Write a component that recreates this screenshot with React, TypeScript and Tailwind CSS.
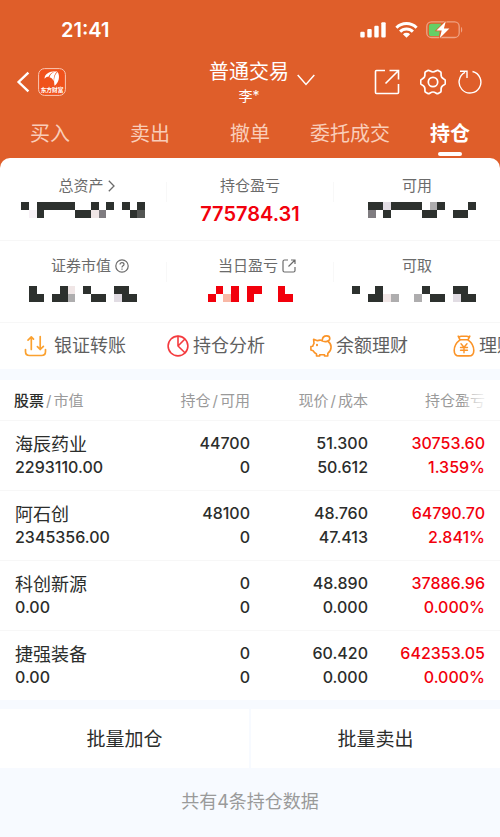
import type { ReactNode } from "react";

const tabs = ["买入", "卖出", "撤单", "委托成交", "持仓"];

const holdings = [
  {
    name: "海辰药业",
    value: "2293110.00",
    amount: "44700",
    usable: "0",
    price: "51.300",
    cost: "50.612",
    profit: "30753.60",
    rate: "1.359%",
  },
  {
    name: "阿石创",
    value: "2345356.00",
    amount: "48100",
    usable: "0",
    price: "48.760",
    cost: "47.413",
    profit: "64790.70",
    rate: "2.841%",
  },
  {
    name: "科创新源",
    value: "0.00",
    amount: "0",
    usable: "0",
    price: "48.890",
    cost: "0.000",
    profit: "37886.96",
    rate: "0.000%",
  },
  {
    name: "捷强装备",
    value: "0.00",
    amount: "0",
    usable: "0",
    price: "60.420",
    cost: "0.000",
    profit: "642353.05",
    rate: "0.000%",
  },
];

// Each character is one block of the censored amount
const blockColors: Record<string, string> = {
  "#": "#2d312e",
  r: "#f2000c",
  o: "#f8b8a6",
  l: "#e1dce3",
  p: "#f0e6e6",
  w: "#f7f1f6",
  m: "#aeadae",
  g: "#7f7c80",
  d: "#535553",
};

function Mosaic({ rows, className }: { rows: string[]; className: string }) {
  return (
    <svg
      viewBox={`0 0 ${rows[0].length} 2`}
      preserveAspectRatio="none"
      shapeRendering="crispEdges"
      aria-hidden="true"
      className={`h-4 ${className}`}
    >
      {rows.map((row, y) =>
        row
          .split("")
          .map((c, x) =>
            blockColors[c] ? (
              <rect key={`${x}-${y}`} x={x} y={y} width="1" height="1" fill={blockColors[c]} />
            ) : null
          )
      )}
    </svg>
  );
}

function StatusBar() {
  return (
    <div className="flex h-14 items-center justify-between pt-1 pr-[37px] pl-[61px]">
      <span className="text-xl font-semibold">21:41</span>
      <div className="flex items-center gap-2">
        <svg viewBox="0 0 27 17" className="h-[17px] w-[27px]" fill="currentColor" aria-hidden="true">
          <rect x="0.3" y="9.8" width="4.4" height="5.7" rx="1.1" />
          <rect x="7.3" y="7" width="4.4" height="8.5" rx="1.1" />
          <rect x="14.3" y="3.8" width="4.4" height="11.7" rx="1.1" />
          <rect x="21.3" y="0.2" width="4.4" height="15.3" rx="1.1" />
        </svg>
        <svg viewBox="0 0 23 17" className="h-[17px] w-[23px]" fill="none" stroke="currentColor" strokeWidth="3" aria-hidden="true">
          <path d="M1.4 5.700a14.300 14.300 0 0 1 20.200 0" />
          <path d="M5.100 9.600a9 9 0 0 1 12.800 0" />
          <path d="M11.500 15.800 7.900 12.200a5.200 5.200 0 0 1 7.200 0z" fill="currentColor" stroke="none" />
        </svg>
        <svg viewBox="0 0 37 18" className="h-[18px] w-[37px]" fill="none" aria-hidden="true">
          <rect x="0.8" y="0.9" width="32.400" height="15.600" rx="4.600" stroke="#efa283" strokeWidth="1.300" />
          <path d="M35 6c1.600.5 1.600 5.100 0 5.600z" fill="#efa283" />
          <path d="M5.500 2.800H15l-2 12.200H5.500a2.600 2.600 0 0 1-2.600-2.600V5.400a2.600 2.600 0 0 1 2.600-2.600z" fill="#65cf66" />
          <path d="M19.800.2 10.400 9.600h5.300l-2 7.600L23.400 7.600h-5.500z" fill="#fff" stroke="#df5e2a" strokeWidth="1.400" paintOrder="stroke" />
        </svg>
      </div>
    </div>
  );
}

function TitleBar() {
  return (
    <div className="grid h-[50px] grid-cols-[1fr_auto_1fr] items-center pr-[18px] pl-4">
      <div className="flex items-center gap-2">
        <button type="button" aria-label="返回">
          <svg viewBox="0 0 14 22" className="h-[22px] w-[14px]" fill="none" stroke="currentColor" strokeWidth="2.400" aria-hidden="true">
            <path d="M12.400 1.600 2.600 11l9.800 9.400" />
          </svg>
        </button>
        <svg viewBox="0 0 28 28" className="size-7" role="img" aria-label="东方财富">
          <rect x="0.600" y="0.600" width="26.800" height="26.800" rx="6" fill="#f0521b" stroke="#f8c9b6" />
          <path d="M6.600 10.800C6.300 6.200 11 3 18 3.200 13.500 4.200 11.500 6.200 10.800 8.600 9.500 8.500 8 9.300 6.600 10.800z" fill="#fff" />
          <path d="M11.600 9.400C12.200 6 15 3.600 19.400 3.300 16.800 5.400 15.500 8.600 15.700 13.200 14.800 10.800 13.200 9.500 11.600 9.400z" fill="#fff" />
          <path d="M16.600 17.800C15.300 11.500 16.500 6.500 19.700 4 22.400 8.600 20.600 14.500 16.600 17.800z" fill="#fff" />
          <text x="14" y="24.400" fontSize="5.700" fontWeight="700" fill="#fff" textAnchor="middle">
            东方财富
          </text>
        </svg>
      </div>

      <button type="button" className="flex items-center gap-2 pl-[26px]">
        <span className="block pt-1">
          <span className="block text-xl leading-6">普通交易</span>
          <span className="block text-sm leading-6">李*</span>
        </span>
        <svg viewBox="0 0 18 12" className="mb-1 h-3 w-[18px]" fill="none" stroke="currentColor" strokeWidth="1.500" aria-hidden="true">
          <path d="M0.700 0.900 9 10.400 17.300 0.900" />
        </svg>
      </button>

      <div className="flex items-center justify-end">
        <button type="button" aria-label="分享" className="mr-5">
          <svg viewBox="0 0 26 26" className="size-[26px]" fill="none" stroke="currentColor" strokeWidth="1.600" aria-hidden="true">
            <path d="M11 1.500H2.500q-1 0-1 1v21q0 1 1 1h21q1 0 1-1V15" />
            <path d="M11.500 14.500 24.500 1.500M15.500 1.500h9v9" />
          </svg>
        </button>
        <button type="button" aria-label="设置" className="mr-3">
          <svg viewBox="0 0 26 26" className="size-[26px]" fill="none" stroke="currentColor" strokeWidth="1.700" strokeLinejoin="round" aria-hidden="true">
            <path d="M8.300 1.300C10 1.300 10.500 3 13 3s3-1.700 4.700-1.700l3.100 1.800c.8 1.500-.4 2.700.8 4.900 1.300 2.100 3 1.700 3.700 3.200v3.600c-.7 1.500-2.400 1.100-3.700 3.200-1.200 2.200 0 3.400-.8 4.900l-3.100 1.800C16 24.700 15.500 23 13 23s-3 1.700-4.700 1.700l-3.100-1.800c-.8-1.500.4-2.700-.8-4.900C3.100 15.900 1.400 16.300.7 14.800v-3.600C1.400 9.700 3.100 10.100 4.400 8c1.200-2.200 0-3.400.8-4.900z" />
            <circle cx="13" cy="13" r="4.700" />
          </svg>
        </button>
        <button type="button" aria-label="刷新">
          <svg viewBox="0 0 24 26" className="h-[26px] w-6" fill="none" stroke="currentColor" strokeWidth="1.400" aria-hidden="true">
            <path d="M14.500 2.500a10.900 10.900 0 1 1-7.500.900" />
            <path d="M2 2.300h7v6.800" />
          </svg>
        </button>
      </div>
    </div>
  );
}

function Tabs() {
  return (
    <nav className="grid h-[52px] grid-cols-5">
      {tabs.map((tab) => {
        const active = tab === "持仓";
        return (
          <a
            key={tab}
            href="#"
            className={
              active
                ? "flex flex-col items-center pt-[14px] text-xl leading-7 font-bold"
                : "flex flex-col items-center pt-[14px] text-xl leading-7 text-[#f9cdb9]"
            }
          >
            {tab}
            {active && <span className="mt-1 h-1 w-6 rounded-full bg-white" />}
          </a>
        );
      })}
    </nav>
  );
}

function Stat({ label, icon, children }: { label: string; icon?: ReactNode; children: ReactNode }) {
  return (
    <div className="flex flex-1 flex-col items-center">
      <div className="flex items-center gap-1 text-[15px] leading-6 text-[#6b6b6b]">
        {label}
        {/* zero width, so that the label alone is centred */}
        {icon && <span className="flex w-0">{icon}</span>}
      </div>
      {children}
    </div>
  );
}

function StatDivider() {
  return <div className="mt-2 h-5 w-px bg-[#f8f8f8]" />;
}

function Summary() {
  return (
    <section>
      <div className="flex h-[82px] pt-4">
        <Stat
          label="总资产"
          icon={
            <svg viewBox="0 0 7 12" className="h-3 w-[7px] shrink-0" fill="none" stroke="currentColor" strokeWidth="1.300" aria-hidden="true">
              <path d="M0.800 0.800 6 6 0.800 11.200" />
            </svg>
          }
        >
          <Mosaic className="mt-1 w-[124px]" rows={["#.#####..#.#.#.#", ".w#....##pg...#d"]} />
        </Stat>
        <StatDivider />
        <Stat label="持仓盈亏">
          <div className="mt-1 text-xl leading-6 font-semibold text-[#f2000c]">775784.31</div>
        </Stat>
        <StatDivider />
        <Stat label="可用">
          <Mosaic className="mt-1 mr-6 w-[108px] self-end" rows={["##l####.m#...#", "g.#....##..##."]} />
        </Stat>
      </div>
      <div className="flex h-[82px] border-t border-[#f7f7f7] pt-[13px]">
        <Stat
          label="证券市值"
          icon={
            <svg viewBox="0 0 14 14" className="size-[14px] shrink-0" fill="none" stroke="currentColor" strokeWidth="1.200" aria-hidden="true">
              <circle cx="7" cy="7" r="6.200" />
              <path d="M5 5.600C5 4.300 5.900 3.600 7 3.600s2 .7 2 1.800c0 1.400-2 1.500-2 3M7 9.400v1.300" />
            </svg>
          }
        >
          <Mosaic className="mt-2 w-[108px]" rows={["#...#p.#...##.", "##.##m..##.l##"]} />
        </Stat>
        <StatDivider />
        <Stat
          label="当日盈亏"
          icon={
            <svg viewBox="0 0 14 14" className="size-[14px] shrink-0" fill="none" stroke="currentColor" strokeWidth="1.200" aria-hidden="true">
              <path d="M6 1H2.500Q1 1 1 2.500v9Q1 13 2.500 13h9q1.500 0 1.500-1.500V8M6.500 7.500 13 1M9 1h4v4" />
            </svg>
          }
        >
          <Mosaic className="mt-2 w-[85px]" rows={[".r.r.rr..r.", "r.or.r...rr"]} />
        </Stat>
        <StatDivider />
        <Stat label="可取">
          <Mosaic className="mt-2 mr-6 w-[124px] self-end" rows={["#..#.....#...##.", "..##pm..m.##.l##"]} />
        </Stat>
      </div>
    </section>
  );
}

function QuickLink({ label, children }: { label: string; children: ReactNode }) {
  return (
    <a href="#" className="flex w-[143px] shrink-0 items-center gap-1 text-lg whitespace-nowrap text-[#5f5f5f]">
      {children}
      {label}
    </a>
  );
}

function QuickLinks() {
  return (
    <nav className="flex h-[47px] overflow-x-auto border-t border-[#f7f7f7] pl-6 [scrollbar-width:none]">
      <QuickLink label="银证转账">
        <svg viewBox="0 0 26 22" className="h-[22px] w-[26px]" fill="none" stroke="#fba12f" strokeWidth="1.700" strokeLinecap="round" strokeLinejoin="round" aria-hidden="true">
          <path d="M1.500 14.500v2q0 4 4 4h12q4 0 4-4v-2" />
          <path d="M7.300 14.500V2M4 5.200 7.300 1.900l2.200 2.200M16.200 1.500v13M13.400 11.700l2.800 2.800 3.200-3.200" />
        </svg>
      </QuickLink>
      <QuickLink label="持仓分析">
        <svg viewBox="0 0 22 22" className="size-[22px]" fill="none" stroke="#f43b3f" strokeWidth="1.600" strokeLinecap="round" strokeLinejoin="round" aria-hidden="true">
          <circle cx="11" cy="11" r="9.900" />
          <path d="M11 1.200V11l6.700-6.700M11 11l6.900 6.700" />
        </svg>
      </QuickLink>
      <QuickLink label="余额理财">
        <svg viewBox="0 0 22 22" className="size-[22px]" fill="none" stroke="#fb9428" strokeWidth="1.600" strokeLinecap="round" strokeLinejoin="round" aria-hidden="true">
          <path d="M11.300 5.200C9.500 4.900 8.400 5.200 7.400 5.800L3.600 4.300 4 8.300C3.500 9.200 3 10.200 2.700 11.200L.9 11.500v3.600l2.300.7c.8 1.500 2 2.500 3.300 3.200v2h3.200v-1.200h4.800V21h3.300v-2.600c2.100-1.600 3.300-3.900 3.300-6.400 0-2.500-1.200-4.300-3-5.500" />
          <path d="M11.500 5.600c3.500 2.100 8.300.7 8.300-2.100 0-1.600-1.400-2.600-3.100-2.600-2.600 0-4.300 1.800-4.400 4.300" />
          <path d="M7 9.800v.4" strokeWidth="2" />
        </svg>
      </QuickLink>
      <QuickLink label="理财">
        <svg viewBox="0 0 22 22" className="size-[22px]" fill="none" stroke="#fb9428" strokeWidth="1.600" strokeLinecap="round" strokeLinejoin="round" aria-hidden="true">
          <path d="M7 4.800 5.200 1.200q1.600 1 3 0h5.600q1.400 1 3 0L15 4.800z" />
          <path d="M7 4.800C3.500 7.400 1.200 11.300 1.200 15.400c0 3.700 1.800 5.500 5 5.500h9.600c3.200 0 5-1.800 5-5.500 0-4.100-2.300-8-5.800-10.600" />
          <path d="M8 8.800l3 3.400 3-3.400M11 12.200v5.600M7.500 12.500h7M7.500 15.200h7" strokeWidth="1.400" />
        </svg>
      </QuickLink>
    </nav>
  );
}

function Slash() {
  return <span className="px-0.5">/</span>;
}

function HoldingsTable() {
  return (
    <table className="w-full table-fixed bg-white text-right text-[#2b2d2b]">
      <thead>
        <tr className="h-10 text-[15px] text-[#9a9a9a]">
          <th className="w-[27%] pt-0.5 pl-[14px] text-left font-normal">
            <span className="font-medium text-[#2b2d2b]">股票</span>
            <Slash />
            市值
          </th>
          <th className="w-[23%] pt-0.5 font-normal">
            持仓
            <Slash />
            可用
          </th>
          <th className="pt-0.5 font-normal">
            现价
            <Slash />
            成本
          </th>
          <th className="relative w-[132px] pt-0.5 pr-[15px] font-normal">
            持仓盈亏
            <span className="absolute inset-y-0 right-0 w-9 bg-gradient-to-r from-white/20 via-white/80 to-white" />
          </th>
        </tr>
      </thead>
      <tbody>
        {holdings.map((item) => (
          <tr key={item.name} className="h-[70px] border-t border-[#f7f7f7] text-base leading-6 font-medium">
            <td className="pl-[15px] text-left">
              <div className="h-6 text-lg leading-7 font-normal">{item.name}</div>
              <div>{item.value}</div>
            </td>
            <td>
              <div>{item.amount}</div>
              <div>{item.usable}</div>
            </td>
            <td>
              <div>{item.price}</div>
              <div>{item.cost}</div>
            </td>
            <td className="pr-[15px] text-[#f2000c]">
              <div>{item.profit}</div>
              <div>{item.rate}</div>
            </td>
          </tr>
        ))}
      </tbody>
    </table>
  );
}

export default function App() {
  return (
    <div className="min-h-screen bg-[#f7faff] font-['Inter','Noto_Sans_CJK_SC',sans-serif]">
      <div className="bg-[#df5e2a]">
        <header className="text-white">
          <StatusBar />
          <TitleBar />
          <Tabs />
        </header>
        <div className="rounded-t-[10px] bg-white">
          <Summary />
          <QuickLinks />
        </div>
      </div>

      <main className="pt-[11px]">
        <HoldingsTable />
        <div className="mt-[9px] grid grid-cols-2 gap-[2px] text-[19px] text-[#2b2d2b]">
          <button type="button" className="h-[59px] bg-white pt-1">
            批量加仓
          </button>
          <button type="button" className="h-[59px] bg-white pt-1">
            批量卖出
          </button>
        </div>
        <p className="py-5 text-center text-lg text-[#9a9a9a]">共有4条持仓数据</p>
      </main>
    </div>
  );
}
